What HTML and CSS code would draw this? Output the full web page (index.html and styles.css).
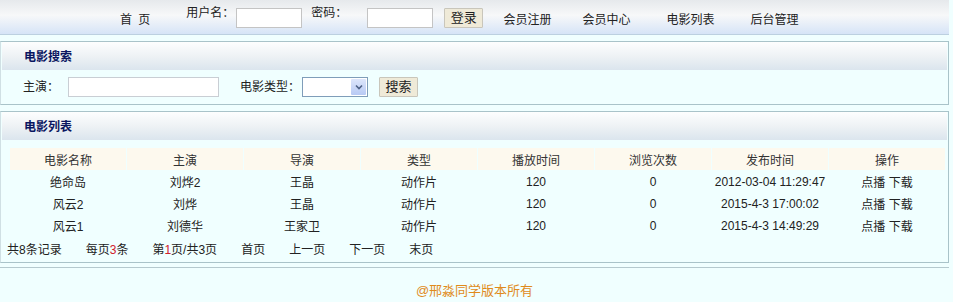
FILE: index.html
```html
<!DOCTYPE html>
<html lang="zh-CN">
<head>
  <meta charset="UTF-8">
  <title>电影列表</title>
  <link rel="stylesheet" href="styles.css">
</head>
<body>
  <div class="page">
    <div class="nav">
      <a href="#" class="nav-link home">首 页</a>
      <span class="nav-label user-label">用户名：</span>
      <input type="text" class="nav-input user-input">
      <span class="nav-label pwd-label">密码：</span>
      <input type="password" class="nav-input pwd-input">
      <button class="btn login-btn">登录</button>
      <a href="#" class="nav-link reg">会员注册</a>
      <a href="#" class="nav-link center">会员中心</a>
      <a href="#" class="nav-link movies">电影列表</a>
      <a href="#" class="nav-link admin">后台管理</a>
    </div>

    <div class="box">
      <div class="box-title">电影搜索</div>
      <form class="search-row">
        <span class="search-label">主演：</span>
        <input type="text" class="search-input">
        <span class="search-label type-label">电影类型：</span>
        <span class="select-wrap">
          <select class="type-select"><option></option></select>
          <span class="select-arrow">
            <svg width="8" height="6" viewBox="0 0 8 6"><path d="M1 1.5 L4 4.5 L7 1.5" fill="none" stroke="#4d6185" stroke-width="1.6"/></svg>
          </span>
        </span>
        <button type="button" class="btn search-btn">搜索</button>
      </form>
    </div>

    <div class="box list-box">
      <div class="box-title">电影列表</div>
      <table class="movie-table">
        <thead>
          <tr>
            <th>电影名称</th>
            <th>主演</th>
            <th>导演</th>
            <th>类型</th>
            <th>播放时间</th>
            <th>浏览次数</th>
            <th>发布时间</th>
            <th>操作</th>
          </tr>
        </thead>
        <tbody>
          <tr>
            <td>绝命岛</td>
            <td>刘烨2</td>
            <td>王晶</td>
            <td>动作片</td>
            <td>120</td>
            <td>0</td>
            <td>2012-03-04 11:29:47</td>
            <td><a href="#">点播</a> <a href="#">下载</a></td>
          </tr>
          <tr>
            <td>风云2</td>
            <td>刘烨</td>
            <td>王晶</td>
            <td>动作片</td>
            <td>120</td>
            <td>0</td>
            <td>2015-4-3 17:00:02</td>
            <td><a href="#">点播</a> <a href="#">下载</a></td>
          </tr>
          <tr>
            <td>风云1</td>
            <td>刘德华</td>
            <td>王家卫</td>
            <td>动作片</td>
            <td>120</td>
            <td>0</td>
            <td>2015-4-3 14:49:29</td>
            <td><a href="#">点播</a> <a href="#">下载</a></td>
          </tr>
        </tbody>
      </table>
      <div class="pager">
        <span>共8条记录</span>
        <span>每页<em>3</em>条</span>
        <span>第<em>1</em>页/共3页</span>
        <a href="#">首页</a>
        <a href="#">上一页</a>
        <a href="#">下一页</a>
        <a href="#">末页</a>
      </div>
    </div>

    <div class="footer">@邢淼同学版本所有</div>
  </div>
</body>
</html>
```

FILE: styles.css
```css
* {
  box-sizing: border-box;
}

body {
  margin: 0;
  background-color: #f0ffff;
  font-family: "Liberation Sans", "Noto Sans CJK SC", sans-serif;
  font-size: 12px;
  color: #222;
}

a {
  color: #222;
  text-decoration: none;
}

.page {
  width: 949px;
}

/* 顶部导航 */
.nav {
  display: flex;
  align-items: flex-start;
  height: 35px;
  padding-left: 120px;
  background: linear-gradient(to bottom, #e6e9ec 0%, #f7f8f9 45%, #d6e4f7 100%);
  border-bottom: 1px solid #bcd0e0;
}

.nav-link {
  padding-top: 12px;
  line-height: 16px;
}

.home {
  word-spacing: 3px;
}

.nav-label {
  padding-top: 5px;
  line-height: 16px;
}

.nav-input {
  width: 66px;
  height: 20px;
  margin-top: 8px;
  border: 1px solid #c4c4c4;
  background: white;
  padding: 0 2px;
}

.user-label { margin-left: 36px; }
.user-input { margin-left: 2px; }
.pwd-label { margin-left: 9px; }
.pwd-input { margin-left: 20px; }

.btn {
  font-family: "Liberation Sans", "Noto Sans CJK SC", sans-serif;
  font-size: 13px;
  color: #222;
  width: 39px;
  height: 20px;
  padding: 0;
  line-height: 16px;
  background-color: #efead8;
  border: 1px solid #c9c6bb;
  border-radius: 1px;
  cursor: pointer;
}

.login-btn {
  margin-left: 11px;
  margin-top: 8px;
}

.reg { margin-left: 20px; }
.center { margin-left: 31px; }
.movies { margin-left: 36px; }
.admin { margin-left: 36px; }

/* 面板 */
.box {
  margin-top: 6px;
  border: 1px solid #a9c3c9;
  border-left-color: #d0e0e4;
}

.box-title {
  height: 28px;
  margin: 0 1px;
  padding-left: 22px;
  line-height: 30px;
  font-weight: bold;
  color: #0a1560;
  background: linear-gradient(to bottom, #fdfefe 0%, #eef2f5 50%, #dbe5ee 100%);
}

.search-row {
  display: flex;
  align-items: center;
  height: 34px;
  margin: 0;
  padding-left: 22px;
}

.search-label {
  line-height: 16px;
}

.search-input {
  width: 151px;
  height: 20px;
  margin-left: 9px;
  border: 1px solid #c9ced4;
  background: white;
}

.type-label { margin-left: 21px; }

.select-wrap {
  position: relative;
  margin-left: 2px;
  width: 66px;
  height: 20px;
}

.type-select {
  appearance: none;
  width: 66px;
  height: 20px;
  border: 1px solid #7f9db9;
  background: white;
}

.select-arrow {
  position: absolute;
  top: 2px;
  right: 2px;
  width: 15px;
  height: 16px;
  display: flex;
  align-items: center;
  justify-content: center;
  background: linear-gradient(to bottom, #dde6fb, #b7c9f4);
  border-radius: 1px;
}

.search-btn {
  margin-left: 11px;
}

/* 列表 */
.movie-table {
  width: 937px;
  margin: 7px 0 0 8px;
  table-layout: fixed;
  border-collapse: separate;
  border-spacing: 1px;
}

.movie-table th {
  height: 22px;
  font-weight: normal;
  background-color: #fdf9ee;
  color: #333;
}

.movie-table td {
  height: 21px;
  text-align: center;
  padding: 0;
}

.pager {
  display: flex;
  gap: 24px;
  height: 22px;
  padding-left: 6px;
  margin-bottom: 3px;
  align-items: center;
}

.pager em {
  font-style: normal;
  color: #d0202a;
}

.footer {
  margin-top: 4px;
  border-top: 1px solid #b5c9ce;
  padding-top: 12px;
  text-align: center;
  font-size: 13px;
  color: #e08b1c;
}
```
